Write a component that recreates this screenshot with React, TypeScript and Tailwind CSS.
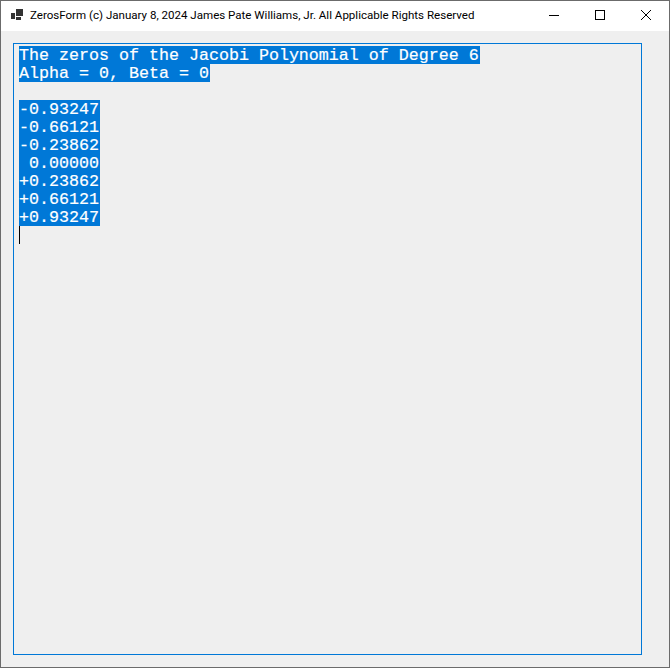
const lines = [
  'The zeros of the Jacobi Polynomial of Degree 6',
  'Alpha = 0, Beta = 0',
  '',
  '-0.93247',
  '-0.66121',
  '-0.23862',
  ' 0.00000',
  '+0.23862',
  '+0.66121',
  '+0.93247',
];

function AppIcon() {
  return (
    <svg width="14" height="14" viewBox="0 0 14 14" className="shrink-0 text-[#333333]" fill="currentColor">
      <rect x="5" y="0" width="7" height="7" />
      <rect x="0" y="4" width="4" height="6" />
      <rect x="5" y="8" width="5" height="3" />
    </svg>
  );
}

export default function App() {
  return (
    <div className="w-[670px] h-[668px] flex flex-col border border-[#6b6b6b] bg-[#efefef] overflow-hidden">
      <div className="h-[30px] shrink-0 bg-white flex items-center">
        <div className="pl-[10px] pr-[5px] flex items-center"><AppIcon /></div>
        <span className="flex-1 text-[11.55px] text-black whitespace-nowrap font-['Roboto',sans-serif]">
          ZerosForm (c) January 8, 2024 James Pate Williams, Jr. All Applicable Rights Reserved
        </span>
        <div className="flex items-center text-black mb-[2px]">
          <div className="w-[46px] flex justify-center">
            <svg width="10" height="10" viewBox="0 0 10 10" shapeRendering="crispEdges"><rect x="0" y="5" width="10" height="1" fill="currentColor" /></svg>
          </div>
          <div className="w-[46px] flex justify-center">
            <svg width="10" height="10" viewBox="0 0 10 10" shapeRendering="crispEdges"><rect x="0.5" y="0.5" width="9" height="9" fill="none" stroke="currentColor" /></svg>
          </div>
          <div className="w-[46px] flex justify-center">
            <svg width="10" height="10" viewBox="0 0 10 10"><path d="M0 0L10 10M10 0L0 10" fill="none" stroke="currentColor" strokeWidth="1" /></svg>
          </div>
        </div>
      </div>
      <div className="flex-1 pt-3 pl-3 pr-[27px]">
        <div className="h-[612px] border border-[#0078d7] pt-[2px] pl-[5px] font-['Liberation_Mono','Courier_New',monospace] text-[16.667px] [-webkit-text-stroke:0.2px_white] whitespace-pre text-white">
          {lines.map((line, i) => (
            <div key={i} className="flex h-[18px]">
              {line && <span className="bg-[#0078d7] h-[18px] leading-[20px] pr-px">{line}</span>}
            </div>
          ))}
          <div className="w-px h-[18px] bg-black" />
        </div>
      </div>
    </div>
  );
}
